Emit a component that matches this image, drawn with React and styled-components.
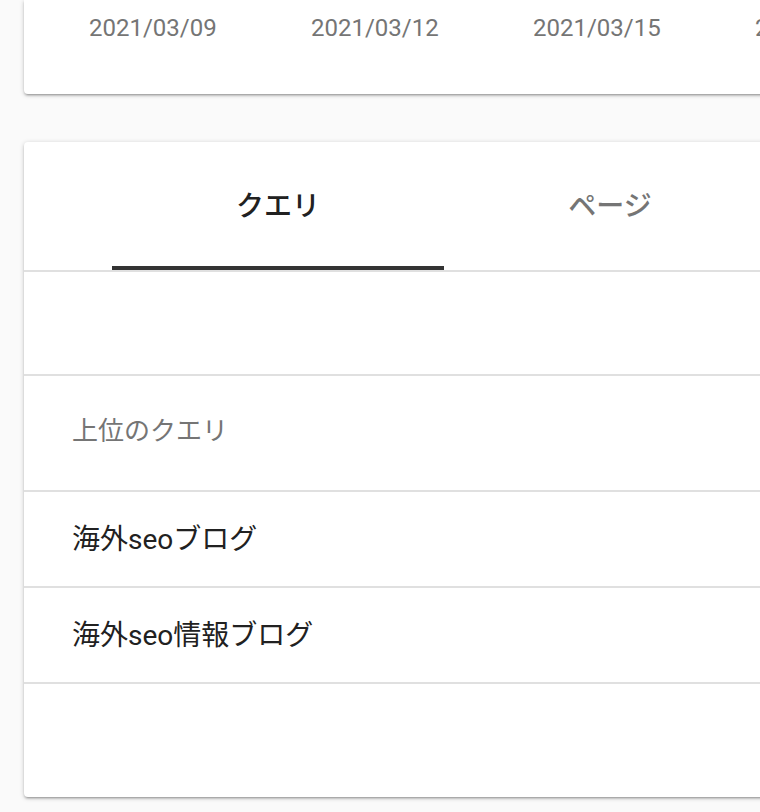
import React from "react"
import styled, { createGlobalStyle } from "styled-components"

const GlobalStyle = createGlobalStyle`
  html, body {
    margin: 0;
    padding: 0;
    background: #fafafa;
    overflow: hidden;
  }
  body {
    font-family: Roboto, "Noto Sans CJK JP", sans-serif;
  }
`

const Page = styled.div`
  width: 760px;
  height: 812px;
  padding-left: 24px;
  box-sizing: border-box;
  display: flex;
  flex-direction: column;
  gap: 48px;
  overflow: hidden;
`

const Card = styled.section`
  background: #fff;
  width: 800px;
  flex-shrink: 0;
  border-radius: ${p => (p.$cut ? "0 0 4px 4px" : "4px")};
  box-shadow: 0 2px 2px rgba(0, 0, 0, 0.14), 0 3px 1px -2px rgba(0, 0, 0, 0.12),
    0 1px 5px rgba(0, 0, 0, 0.2);
  box-sizing: border-box;
  overflow: hidden;
`

const ChartCard = styled(Card)`
  height: 94px;
  padding: 12px 0 0 65px;
`

const DateAxis = styled.div`
  display: flex;
  gap: 96px;
`

const DateLabel = styled.span`
  font-size: 24px;
  line-height: 32px;
  color: #757575;
  white-space: nowrap;
  width: 126px;
  flex-shrink: 0;
`

const TableCard = styled(Card)`
  height: 655px;
  display: flex;
  flex-direction: column;
`

const TabBar = styled.div`
  display: flex;
  height: 128px;
  padding-left: 88px;
  border-bottom: 2px solid #e0e0e0;
`

const Tab = styled.button`
  position: relative;
  width: 332px;
  height: 100%;
  border: 0;
  background: none;
  padding: 0 0 4px;
  font-family: inherit;
  font-size: 28px;
  font-weight: 500;
  color: ${p => (p.$active ? "#212121" : "#757575")};
  cursor: pointer;

  &::after {
    content: "";
    display: ${p => (p.$active ? "block" : "none")};
    position: absolute;
    left: 0;
    right: 0;
    bottom: 0;
    height: 4px;
    background: #333;
  }
`

const Row = styled.div`
  display: flex;
  align-items: center;
  height: ${p => p.$h}px;
  padding: 0 0 ${p => (p.$head ? 10 : 4)}px 48px;
  box-sizing: border-box;
  border-bottom: 2px solid #e0e0e0;
  font-size: ${p => (p.$head ? 26 : 28)}px;
  color: ${p => (p.$head ? "#757575" : "#212121")};
  white-space: nowrap;
`

const dates = ["2021/03/09", "2021/03/12", "2021/03/15", "2021/03/18"]
const queries = ["海外seoブログ", "海外seo情報ブログ"]

export default function App() {
  return (
    <>
      <GlobalStyle />
      <Page>
        <ChartCard $cut>
          <DateAxis>
            {dates.map(d => (
              <DateLabel key={d}>{d}</DateLabel>
            ))}
          </DateAxis>
        </ChartCard>
        <TableCard>
          <TabBar>
            <Tab $active>クエリ</Tab>
            <Tab>ページ</Tab>
          </TabBar>
          <Row $h={104} />
          <Row $h={116} $head>上位のクエリ</Row>
          {queries.map(q => (
            <Row key={q} $h={96}>{q}</Row>
          ))}
        </TableCard>
      </Page>
    </>
  )
}
